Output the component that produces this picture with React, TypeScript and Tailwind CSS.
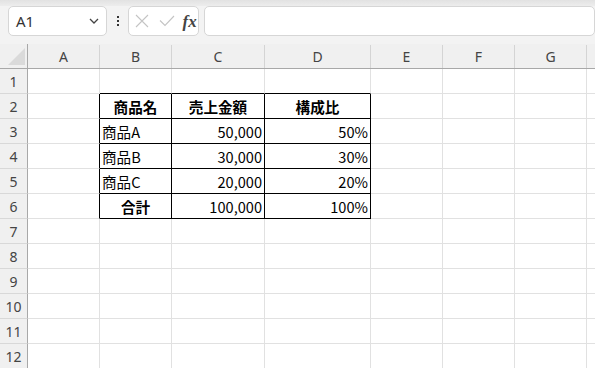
import React from "react";

const cols = [
  { name: "A", w: 72 },
  { name: "B", w: 72 },
  { name: "C", w: 93 },
  { name: "D", w: 106 },
  { name: "E", w: 72 },
  { name: "F", w: 72 },
  { name: "G", w: 72 },
  { name: "", w: 72 },
];

type Cell = { t: string; align: "l" | "r" | "c"; bold?: boolean };

const data: Record<number, Cell[]> = {
  2: [
    { t: "商品名", align: "c", bold: true },
    { t: "売上金額", align: "c", bold: true },
    { t: "構成比", align: "c", bold: true },
  ],
  3: [
    { t: "商品A", align: "l" },
    { t: "50,000", align: "r" },
    { t: "50%", align: "r" },
  ],
  4: [
    { t: "商品B", align: "l" },
    { t: "30,000", align: "r" },
    { t: "30%", align: "r" },
  ],
  5: [
    { t: "商品C", align: "l" },
    { t: "20,000", align: "r" },
    { t: "20%", align: "r" },
  ],
  6: [
    { t: "合計", align: "c", bold: true },
    { t: "100,000", align: "r" },
    { t: "100%", align: "r" },
  ],
};

const jp = { fontFamily: '"Noto Sans CJK JP", "Noto Sans", sans-serif' };
const ui = { fontFamily: '"Noto Sans", "Open Sans", sans-serif' };

export default function App() {
  const rows = Array.from({ length: 12 }, (_, i) => i + 1);
  return (
    <div className="w-[595px] h-[368px] overflow-hidden bg-[#f3f3f3] flex flex-col" style={ui}>
      <div className="h-[6px] bg-gradient-to-b from-[#e2e2e2] to-[#ededed] shrink-0" />
      <div className="h-[30px] flex items-stretch shrink-0">
        <div className="ml-[8px] w-[101px] bg-white border border-[#d6d6d6] rounded-[5px] flex items-center justify-between pl-[7px] pr-[7px]">
          <span className="text-[15px] text-[#333]">A1</span>
          <svg width="10" height="6" viewBox="0 0 10 6" fill="none" stroke="#444" strokeWidth="1.3">
            <path d="M1 1l4 4 4-4" />
          </svg>
        </div>
        <div className="w-[21px] flex flex-col items-center justify-center gap-[2px] pl-[1px]">
          <div className="w-[2px] h-[2px] bg-[#333]" />
          <div className="w-[2px] h-[2px] bg-[#333]" />
          <div className="w-[2px] h-[2px] bg-[#333]" />
        </div>
        <div className="w-[73px] bg-white border border-[#d6d6d6] rounded-[5px] flex items-center pl-[6px]">
          <svg width="14" height="14" viewBox="0 0 14 14" stroke="#c4c4c4" strokeWidth="1.1" fill="none">
            <path d="M1 1l12 12M13 1L1 13" />
          </svg>
          <svg className="ml-[10px]" width="16" height="12" viewBox="0 0 16 12" stroke="#c4c4c4" strokeWidth="1.1" fill="none">
            <path d="M1 5.5l5 5L15 1" />
          </svg>
          <span className="ml-[8px] text-[17px] italic font-bold text-[#444] leading-none" style={{ fontFamily: '"Liberation Serif", serif' }}>
            fx
          </span>
        </div>
        <div className="ml-[5px] w-[400px] bg-white border border-[#d6d6d6] rounded-[5px]" />
      </div>
      <div className="h-[8px] shrink-0" />
      {/* header row */}
      <div className="flex h-[25px] shrink-0 border-b border-[#a8a8a8] bg-[#f0f0f0]">
        <div className="w-[28px] shrink-0 relative border-r border-[#a8a8a8]">
          <div
            className="absolute left-[8px] top-[4px] w-[17px] h-[17px] bg-[#dadada]"
            style={{ clipPath: "polygon(100% 0, 100% 100%, 0 100%)" }}
          />
        </div>
        {cols.map((c, i) => (
          <div key={i} className="shrink-0 flex flex-col" style={{ width: c.w }}>
            <div className="flex-1 flex items-end">
              <div className="flex-1 flex items-center justify-center h-[24px] text-[14px] text-[#444] pt-[1px]">
                {c.name}
              </div>
              <div className="w-px h-[23px] bg-[#d4d4d4]" />
            </div>
          </div>
        ))}
      </div>
      {rows.map((r) => (
        <div key={r} className="flex h-[25px] shrink-0">
          <div className="w-[28px] shrink-0 bg-[#f0f0f0] border-r border-[#a8a8a8] border-b border-b-[#d8d8d8] flex items-center justify-center text-[14px] text-[#444] pt-[1px]">
            {r}
          </div>
          {cols.map((c, ci) => {
            const inTableCol = ci >= 1 && ci <= 3;
            const inTableRow = r >= 2 && r <= 6;
            const cell = inTableCol && inTableRow ? data[r][ci - 1] : null;
            const rightBlack = inTableRow && ci >= 0 && ci <= 3;
            const bottomBlack = inTableCol && r >= 1 && r <= 6;
            return (
              <div
                key={ci}
                className={
                  "shrink-0 bg-white border-r border-b flex items-center pt-[2px] " +
                  (rightBlack ? "border-r-black " : "border-r-[#e1e1e1] ") +
                  (bottomBlack ? "border-b-black " : "border-b-[#e1e1e1] ") +
                  (cell?.align === "r" ? "justify-end pr-[2px] " : cell?.align === "c" ? "justify-center " : "pl-[2px] ")
                }
                style={{ width: c.w }}
              >
                {cell && (
                  <span
                    className={"text-[14.6px] text-black whitespace-nowrap " + (cell.bold ? "font-bold" : "")}
                    style={jp}
                  >
                    {cell.t}
                  </span>
                )}
              </div>
            );
          })}
        </div>
      ))}
    </div>
  );
}
